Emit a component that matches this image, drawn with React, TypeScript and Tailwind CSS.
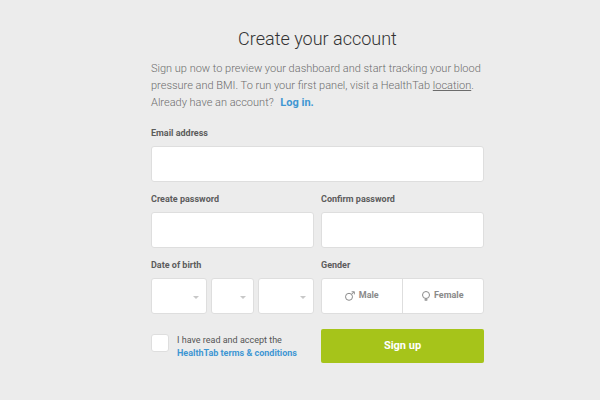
import { useState } from "react";
import type { InputHTMLAttributes, ReactNode } from "react";

const fieldClass =
  "h-9 w-full rounded-[3px] border border-[#dedede] bg-white text-xs text-[#555] outline-none focus:border-[#3f97d3]";

const months = ["Jan", "Feb", "Mar", "Apr", "May", "Jun", "Jul", "Aug", "Sep", "Oct", "Nov", "Dec"];
const days = Array.from({ length: 31 }, (_, i) => String(i + 1));
const years = Array.from({ length: 90 }, (_, i) => String(2013 - i));

function FieldTitle({ children }: { children: ReactNode }) {
  return (
    <span className="mb-[5px] block text-[9px] leading-4 font-bold text-[#5c5c5c]">{children}</span>
  );
}

function TextField({ label, ...props }: { label: string } & InputHTMLAttributes<HTMLInputElement>) {
  return (
    <label className="block">
      <FieldTitle>{label}</FieldTitle>
      <input {...props} className={`${fieldClass} block px-2`} />
    </label>
  );
}

function DateSelect({ label, options }: { label: string; options: string[] }) {
  return (
    <div className="relative">
      <select
        aria-label={label}
        defaultValue=""
        className={`${fieldClass} block appearance-none pr-4 pl-2`}
      >
        <option value="" />
        {options.map((option) => (
          <option key={option}>{option}</option>
        ))}
      </select>
      <svg
        viewBox="0 0 6 3"
        className="pointer-events-none absolute top-[18px] right-2 h-[3px] w-1.5 fill-[#c8c8c8]"
      >
        <path d="M0 0h6L3 3z" />
      </svg>
    </div>
  );
}

function MaleIcon() {
  return (
    <svg viewBox="0 0 10 10" className="size-2.5 fill-none stroke-[#8a8a8a]">
      <circle cx="4" cy="5.8" r="3.5" />
      <path d="M6.5 3.3 9 .8M6.6.8h2.7v2.6" />
    </svg>
  );
}

function FemaleIcon() {
  return (
    <svg viewBox="0 0 8 10" className="h-2.5 w-2 fill-none stroke-[#8a8a8a]">
      <circle cx="4" cy="4" r="3.5" />
      <path d="M4 7.5V10M2.4 8.9h3.2" />
    </svg>
  );
}

export default function App() {
  const [gender, setGender] = useState<string | null>(null);

  const genders = [
    { value: "Male", icon: <MaleIcon /> },
    { value: "Female", icon: <FemaleIcon /> },
  ];

  return (
    <main className="min-h-screen bg-[#ececec] pt-[25px] pb-9 pl-[35px] font-['Roboto',sans-serif]">
      <form className="mx-auto max-w-[333px]" onSubmit={(event) => event.preventDefault()}>
        <h1 className="text-center text-lg leading-7 font-light text-[#333]">
          Create your account
        </h1>
        <p className="mt-[7px] text-[11px] leading-[17px] font-light whitespace-nowrap text-[#6c6c6c]">
          Sign up now to preview your dashboard and start tracking your blood
          <br />
          pressure and BMI. To run your first panel, visit a HealthTab{" "}
          <a href="#location" className="underline">
            location
          </a>
          .
          <br />
          Already have an account?{" "}
          <a href="#login" className="ml-1 font-bold text-[#3f97d3]">
            Log in.
          </a>
        </p>

        <div className="mt-3.5 space-y-[9px]">
          <TextField label="Email address" type="email" name="email" />

          <div className="grid grid-cols-2 gap-[7px]">
            <TextField label="Create password" type="password" name="password" />
            <TextField label="Confirm password" type="password" name="confirm" />
          </div>

          <div className="grid grid-cols-2 gap-[7px]">
            <fieldset>
              <legend className="contents">
                <FieldTitle>Date of birth</FieldTitle>
              </legend>
              <div className="grid grid-cols-[4fr_3fr_4fr] gap-1">
                <DateSelect label="Month" options={months} />
                <DateSelect label="Day" options={days} />
                <DateSelect label="Year" options={years} />
              </div>
            </fieldset>

            <fieldset>
              <legend className="contents">
                <FieldTitle>Gender</FieldTitle>
              </legend>
              <div className="grid h-9 grid-cols-2 divide-x divide-[#dedede] rounded-[3px] border border-[#dedede] bg-white">
                {genders.map(({ value, icon }) => (
                  <label
                    key={value}
                    className="flex cursor-pointer items-center justify-center text-[9px] font-bold text-[#8a8a8a] has-checked:bg-[#f4f8e4]"
                  >
                    <input
                      type="radio"
                      name="gender"
                      value={value}
                      checked={gender === value}
                      onChange={() => setGender(value)}
                      className="appearance-none"
                    />
                    {icon}
                    <span className="ml-1">{value}</span>
                  </label>
                ))}
              </div>
            </fieldset>
          </div>
        </div>

        <div className="mt-[15px] grid grid-cols-2 gap-[7px]">
          <div className="flex items-start gap-2 pt-[5px]">
            <input
              id="terms"
              type="checkbox"
              className="size-[18px] shrink-0 appearance-none rounded-[3px] border border-[#dedede] bg-white checked:bg-[#a6c41a]"
            />
            <label htmlFor="terms" className="text-[9px] leading-[13px] whitespace-nowrap text-[#555]">
              I have read and accept the
              <br />
              <a href="#terms" className="font-bold text-[#3f97d3]">
                HealthTab terms &amp; conditions
              </a>
            </label>
          </div>
          <button
            type="submit"
            className="h-[34px] rounded-xs bg-[#a6c41a] text-[11px] font-bold text-white hover:bg-[#98b416]"
          >
            Sign up
          </button>
        </div>
      </form>
    </main>
  );
}
